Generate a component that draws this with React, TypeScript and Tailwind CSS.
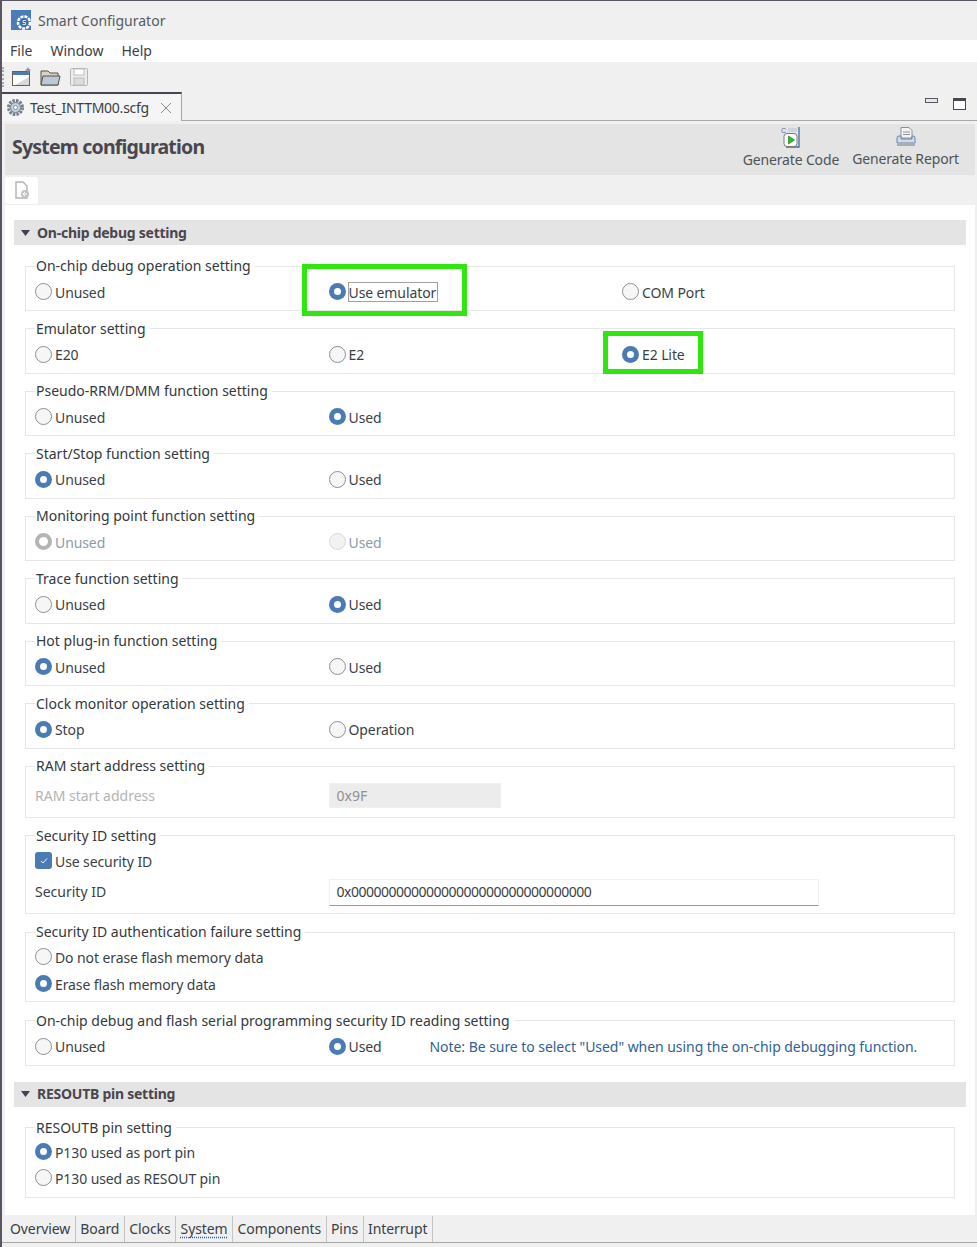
const font = "font-['Noto_Sans',sans-serif]";

function Radio({ checked, disabled, label, blue }: { checked?: boolean; disabled?: boolean; label: string; blue?: boolean }) {
  return (
    <div className="flex items-center gap-[3px] tracking-[-0.1px]">
      {checked && !disabled ? (
        <span className="flex h-[17px] w-[17px] -translate-y-px items-center justify-center rounded-full bg-[#4a7bb3]">
          <span className="h-[7px] w-[7px] rounded-full bg-white" />
        </span>
      ) : checked && disabled ? (
        <span className="flex h-[17px] w-[17px] -translate-y-px items-center justify-center rounded-full border-[4px] border-[#b4b4b4] bg-white" />
      ) : disabled ? (
        <span className="h-[17px] w-[17px] -translate-y-px rounded-full border border-[#d8d8d8] bg-[#f2f2f2]" />
      ) : (
        <span className="h-[17px] w-[17px] -translate-y-px rounded-full border border-[#8a9096] bg-[#f6f6f6]" />
      )}
      <span className={disabled ? "text-[#8e9aa8]" : blue ? "text-[#2f5f96]" : ""}>{label}</span>
    </div>
  );
}

function Group({ title, children, className }: { title: string; children: React.ReactNode; className: string }) {
  return (
    <fieldset className={`mx-[20px] border border-[#e6e6e6] pl-[9px] ${className}`}>
      <legend className="h-5 bg-white pl-[1px] pr-[4px] leading-5 text-[#33383d]">{title}</legend>
      {children}
    </fieldset>
  );
}

// two or three choices on the shared column grid
function Choices({ items }: { items: { label: string; checked?: boolean; disabled?: boolean }[] }) {
  return (
    <div className="grid h-[33px] grid-cols-[293.5px_293.5px_1fr] items-center">
      {items.map((it) => (
        <Radio key={it.label} {...it} />
      ))}
    </div>
  );
}

function SectionHeader({ title }: { title: string }) {
  return (
    <div className="flex h-[25px] items-center gap-[7px] bg-[#e3e4e3] pl-[7px] text-[14px] font-bold tracking-[-0.25px] text-[#4a4650]">
      <svg width="9" height="6" viewBox="0 0 9 6"><path d="M0 0h9L4.5 6z" fill="#444058" /></svg>
      {title}
    </div>
  );
}

function LogoIcon() {
  return (
    <svg width="20" height="20" viewBox="0 0 20 20" className="shrink-0 -translate-y-px">
      <rect width="20" height="20" fill="#4a7db8" />
      <circle cx="13" cy="12.5" r="6" fill="none" stroke="#fff" strokeWidth="2.5" strokeDasharray="3 1" />
      <circle cx="13" cy="12.5" r="4" fill="#3a6ca6" />
      <path d="M15 10.5h-3v2h2.500v2h-3" fill="none" stroke="#fff" strokeWidth="0.8" />
    </svg>
  );
}

function GearIcon() {
  return (
    <svg width="19" height="19" viewBox="0 0 19 19" className="shrink-0">
      <circle cx="9.500" cy="9.500" r="7" fill="#dfe4ea" stroke="#77808c" strokeWidth="3" strokeDasharray="2.500 1.200" />
      <circle cx="9.500" cy="9.500" r="5" fill="#c7d1de" stroke="#6d7a8c" />
      <circle cx="9.500" cy="9.500" r="2" fill="#fff" stroke="#8090a6" />
    </svg>
  );
}

function ToolbarIcons() {
  return (
    <div className="flex items-center">
      <span className="ml-0 mr-[8px] h-[20px] border-l-2 border-dotted border-[#a9a9a9]" />
      <svg width="20" height="20" viewBox="0 0 20 20">
        <rect x="0.500" y="4.500" width="17" height="14" fill="#fff" stroke="#6b5d50" />
        <rect x="1" y="5" width="16" height="3" fill="#4a7db8" />
        <path d="M3 18l14-8v8z" fill="#d8d8d8" />
        <path d="M16 0l1 2 2 1-2 1-1 2-1-2-2-1 2-1z" fill="#8e8e8e" />
      </svg>
      <svg width="21" height="20" viewBox="0 0 21 20" className="ml-[8px]">
        <path d="M1 4h7l2 2h8v12H1z" fill="#d7d3c8" stroke="#5b5144" />
        <path d="M1 18l2-9h17l-2 9z" fill="#bcc8d6" stroke="#5b5144" />
      </svg>
      <svg width="20" height="20" viewBox="0 0 20 20" className="ml-[8px]">
        <rect x="1.500" y="1.500" width="17" height="17" rx="1" fill="#ececec" stroke="#b5b5b5" />
        <rect x="5" y="2" width="10" height="6" fill="#fff" stroke="#bdbdbd" />
        <rect x="5" y="11" width="10" height="7" fill="#dcdcdc" stroke="#bdbdbd" />
      </svg>
    </div>
  );
}

function GenerateCodeIcon() {
  return (
    <svg width="20" height="22" viewBox="0 0 20 22">
      <path d="M18 1v20H5" fill="none" stroke="#3f6ea8" strokeWidth="1.300" />
      <text x="0" y="7" fontSize="7" fill="#3f6ea8" fontFamily="Liberation Sans">C</text>
      <rect x="7" y="2" width="9" height="4" fill="#cdd5df" />
      <rect x="3" y="7.500" width="13" height="13" rx="3" fill="#fff" stroke="#7a7a7a" />
      <path d="M7.500 10l6 4-6 4z" fill="#26c21d" stroke="#136b10" strokeWidth="0.600" />
    </svg>
  );
}

function GenerateReportIcon() {
  return (
    <svg width="20" height="20" viewBox="0 0 20 20">
      <path d="M5 0.500h8l3 3V11H5z" fill="#f4f4f4" stroke="#8f8f8f" />
      <path d="M7 5h7M7 7.500h7" stroke="#8f949b" />
      <path d="M1 11a2 2 0 0 1 2-2h2v3h11V9h1a2 2 0 0 1 2 2v5H1z" fill="#d5dae0" stroke="#5f86b5" />
      <rect x="1" y="15.500" width="18" height="3.500" fill="#a7adb5" />
    </svg>
  );
}

function PageIcon() {
  return (
    <svg width="18" height="18" viewBox="0 0 18 18">
      <path d="M3 1h7l4 4v12H3z" fill="#fff" stroke="#b3b3b3" strokeWidth="1.400" />
      <circle cx="12" cy="13" r="4" fill="#c4c4c4" />
      <path d="M14 13h-4m2-2l-2 2 2 2" fill="none" stroke="#fff" />
    </svg>
  );
}

const bottomTabs = ["Overview", "Board", "Clocks", "System", "Components", "Pins", "Interrupt"];

export default function App() {
  return (
    <div className={`${font} relative h-[1247px] w-[977px] overflow-hidden border-t border-l-2 border-[#5a5560] bg-[#f0f0f0] text-[14px] leading-5 text-[#3a3f45]`}>
      {/* window chrome */}
      <div className="flex h-[39px] items-center gap-[7px] pl-[9px] text-[#555b60]">
        <LogoIcon />
        Smart Configurator
      </div>
      <div className="flex h-[22px] items-center gap-[18px] bg-white pl-[8px]">
        <span>File</span>
        <span>Window</span>
        <span>Help</span>
      </div>
      <div className="flex h-[30px] items-center">
        <ToolbarIcons />
      </div>

      {/* editor tab */}
      <div className="flex h-[29px] items-end border-b border-[#a8a8a8]">
        <div className="-mb-px flex h-[29px] w-[180px] items-center gap-[5px] border-t-2 border-r border-[#4a4550] border-r-[#a8a8a8] bg-[#f5f5f5] pl-[4px]">
          <GearIcon />
          <span className="tracking-[-0.25px] text-[#3a3f45]">Test_INTTM00.scfg</span>
          <svg width="12" height="12" viewBox="0 0 12 12" className="ml-[6px]"><path d="M1 1l10 10M11 1L1 11" stroke="#8a8a8a" /></svg>
        </div>
        <div className="ml-auto flex h-full items-start gap-[15px] pr-[11px] pt-[6px]">
          <span className="h-[5px] w-[13px] border border-[#5a5560] bg-[#e8e8e8]" />
          <span className="h-[12px] w-[13px] border-[1.500px] border-t-[3px] border-[#4a4550] bg-white" />
        </div>
      </div>

      {/* header */}
      <div className="ml-[3px] mr-[2px] mt-[3px] flex h-[51px] bg-[#e3e4e3]">
        <div className="flex flex-1 items-center pb-[6px] pl-[7px] text-[19.5px] font-bold tracking-[-0.8px] text-[#4a4650]">System configuration</div>
        <div className="flex gap-[13px] pr-[16px] tracking-[-0.15px] text-[#4f5358]">
          <div className="flex flex-col items-center pt-[2px]">
            <GenerateCodeIcon />
            <span className="mt-[2px]">Generate Code</span>
          </div>
          <div className="flex flex-col items-center pt-[3px]">
            <GenerateReportIcon />
            <span className="mt-[2px]">Generate Report</span>
          </div>
        </div>
      </div>
      <div className="ml-[3px] flex h-[30px] items-center">
        <div className="flex h-[27px] w-[33px] items-center justify-center rounded-[2px] bg-white">
          <PageIcon />
        </div>
      </div>

      {/* scrolling form */}
      <div className="relative ml-[3px] mr-[2px] h-[1010px] bg-white pt-[15px]">
        <div className="mx-[9px]"><SectionHeader title="On-chip debug setting" /></div>
        <div className="mt-[11px] flex flex-col gap-[7.500px]">
          <Group title="On-chip debug operation setting" className="h-[55px]">
            <Choices items={[{ label: "Unused" }, { label: "Use emulator", checked: true }, { label: "COM Port" }]} />
          </Group>
          <Group title="Emulator setting" className="h-[55px]">
            <Choices items={[{ label: "E20" }, { label: "E2" }, { label: "E2 Lite", checked: true }]} />
          </Group>
          <Group title="Pseudo-RRM/DMM function setting" className="h-[55px]">
            <Choices items={[{ label: "Unused" }, { label: "Used", checked: true }]} />
          </Group>
          <Group title="Start/Stop function setting" className="h-[55px]">
            <Choices items={[{ label: "Unused", checked: true }, { label: "Used" }]} />
          </Group>
          <Group title="Monitoring point function setting" className="h-[55px]">
            <Choices items={[{ label: "Unused", checked: true, disabled: true }, { label: "Used", disabled: true }]} />
          </Group>
          <Group title="Trace function setting" className="h-[55px]">
            <Choices items={[{ label: "Unused" }, { label: "Used", checked: true }]} />
          </Group>
          <Group title="Hot plug-in function setting" className="h-[55px]">
            <Choices items={[{ label: "Unused", checked: true }, { label: "Used" }]} />
          </Group>
          <Group title="Clock monitor operation setting" className="h-[55px]">
            <Choices items={[{ label: "Stop", checked: true }, { label: "Operation" }]} />
          </Group>
          <Group title="RAM start address setting" className="h-[62px]">
            <div className="mt-[7px] grid h-[25px] grid-cols-[293.5px_1fr] items-center">
              <span className="text-[#b4b4b4]">RAM start address</span>
              <span className="flex h-[25px] w-[172px] items-center border border-[#f0f0f0] bg-[#ececec] pl-[7px] text-[#8d9296]">0x9F</span>
            </div>
          </Group>
          <Group title="Security ID setting" className="h-[88px]">
            <div className="mt-[3px] flex h-[26px] items-center gap-[3px] tracking-[-0.1px]">
              <span className="flex h-[17px] w-[17px] -translate-y-px items-center justify-center rounded-[3px] bg-[#4a7bb3]">
                <svg width="8" height="8" viewBox="0 0 8 8"><path d="M1 4l2 2 4-4.500" fill="none" stroke="#fff" strokeWidth="0.900" /></svg>
              </span>
              Use security ID
            </div>
            <div className="mt-[4px] grid h-[27px] grid-cols-[293.5px_1fr] items-center">
              <span>Security ID</span>
              <span className="flex h-[27px] w-[490px] items-center border border-[#f0f0f0] border-b-[#9a9a9a] pl-[7px] tracking-[-0.5px]">0x00000000000000000000000000000000</span>
            </div>
          </Group>
          <Group title="Security ID authentication failure setting" className="mt-[1px] h-[80px]">
            <div className="mt-[2px] flex h-[27px] items-center"><Radio label="Do not erase flash memory data" /></div>
            <div className="flex h-[27px] items-center"><Radio label="Erase flash memory data" checked /></div>
          </Group>
          <Group title="On-chip debug and flash serial programming security ID reading setting" className="mt-[1px] h-[55px]">
            <div className="grid h-[33px] grid-cols-[293.5px_101px_1fr] items-center">
              <Radio label="Unused" />
              <Radio label="Used" checked />
              <span className="tracking-[-0.05px] text-[#2f5f96]">Note: Be sure to select "Used" when using the on-chip debugging function.</span>
            </div>
          </Group>
        </div>
        <div className="mx-[9px] mt-[16px]"><SectionHeader title="RESOUTB pin setting" /></div>
        <div className="mt-[11px]">
          <Group title="RESOUTB pin setting" className="h-[80px]">
            <div className="mt-[2px] flex h-[26px] items-center"><Radio label="P130 used as port pin" checked /></div>
            <div className="flex h-[26px] items-center"><Radio label="P130 used as RESOUT pin" /></div>
          </Group>
        </div>
      </div>

      {/* page tabs */}
      <div className="flex h-[28px] items-center border-b border-[#a8a8a8] pl-[3.500px] pt-px tracking-[-0.1px]">
        {bottomTabs.map((t) => (
          <span
            key={t}
            className={`flex h-[26px] items-center border-r border-[#c4c4c4] px-[4.500px] ${t === "System" ? "underline decoration-dotted decoration-[#2f5f96] underline-offset-[3px]" : ""}`}
          >
            {t}
          </span>
        ))}
      </div>

      {/* annotation boxes drawn over the screenshot */}
      <div className="absolute left-[300px] top-[263px] h-[52px] w-[165px] border-[5px] border-[#2fe60f]" />
      <div className="absolute left-[601px] top-[330px] h-[43px] w-[100px] border-[5px] border-[#2fe60f]" />
      <div className="absolute left-[346px] top-[281px] h-[20px] w-[90px] border border-[#a0a0a0]" />
    </div>
  );
}
